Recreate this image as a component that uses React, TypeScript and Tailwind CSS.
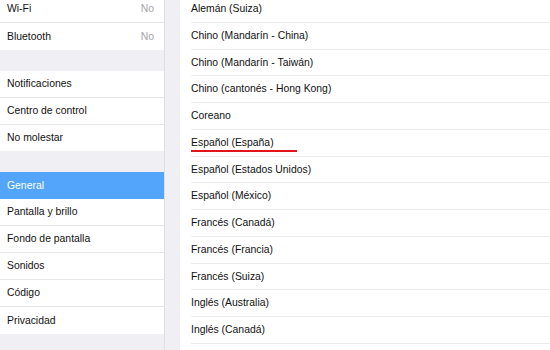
import React from 'react'

const leftGroups: { label: string; value?: string; selected?: boolean }[][] = [
  [{ label: 'Wi-Fi', value: 'No' }, { label: 'Bluetooth', value: 'No' }],
  [{ label: 'Notificaciones' }, { label: 'Centro de control' }, { label: 'No molestar' }],
  [
    { label: 'General', selected: true },
    { label: 'Pantalla y brillo' },
    { label: 'Fondo de pantalla' },
    { label: 'Sonidos' },
    { label: 'Código' },
    { label: 'Privacidad' },
  ],
]

const languages = [
  'Alemán (Suiza)',
  'Chino (Mandarín - China)',
  'Chino (Mandarín - Taiwán)',
  'Chino (cantonés - Hong Kong)',
  'Coreano',
  'Español (España)',
  'Español (Estados Unidos)',
  'Español (México)',
  'Francés (Canadá)',
  'Francés (Francia)',
  'Francés (Suiza)',
  'Inglés (Australia)',
  'Inglés (Canadá)',
  '',
]

export default function App() {
  return (
    <div
      className="w-[550px] h-[350px] overflow-hidden flex bg-[#efeff4] text-[10.4px] text-[#111]"
      style={{ fontFamily: '"Liberation Sans", Arial, sans-serif' }}
    >
      {/* Settings sidebar */}
      <div className="w-[165px] flex flex-col -mt-[4px] border-r border-[#dedee2]">
        {leftGroups.map((group, gi) => (
          <div key={gi} className={gi > 0 ? 'mt-[21px]' : ''}>
            {group.map((item, i) => (
              <div
                key={item.label}
                className={`h-[26.9px] flex items-center justify-between pl-[7px] pr-[10px] ${
                  item.selected ? 'bg-[#52a5fb] text-white' : 'bg-white'
                } ${i < group.length - 1 && !item.selected ? 'border-b border-[#e6e6ea]' : ''}`}
              >
                <span>{item.label}</span>
                {item.value && <span className="text-[#a4a4a8]">{item.value}</span>}
              </div>
            ))}
          </div>
        ))}
      </div>

      {/* Language list */}
      <div className="flex-1 ml-[15px] bg-white -mt-[4px] pl-[11px]">
        {languages.map((lang, i) => (
          <div key={i} className="relative h-[26.75px] flex items-center border-b border-[#ececef]">
            <span>{lang}</span>
            {lang === 'Español (España)' && (
              <span className="absolute left-0 top-[20px] w-[106px] h-[2px] bg-[#e2141c]" />
            )}
          </div>
        ))}
      </div>
    </div>
  )
}
